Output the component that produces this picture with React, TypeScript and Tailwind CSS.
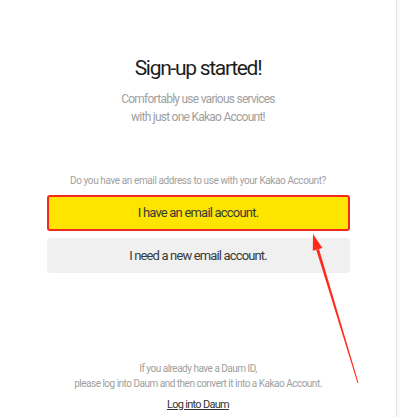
export default function App() {
  return (
    <div
      className="relative flex h-[417px] w-[400px] bg-[#fafafa]"
      style={{ fontFamily: 'Roboto, "Noto Sans", sans-serif' }}
    >
      <div className="flex h-full w-[397px] flex-col items-center border-r border-[#e4e4e4] bg-white pt-[54px]">
        <h1 className="text-[21px] leading-[28px] font-normal tracking-[-1.3px] text-[#1e1e1e]">Sign-up started!</h1>
        <p className="mt-[8px] text-center text-[12px] leading-[18px] tracking-[-0.75px] text-[#a0a0a0]">
          Comfortably use various services
          <br />
          with just one Kakao Account!
        </p>

        <p className="mt-[47px] text-[10px] leading-[16px] tracking-[-0.4px] text-[#a0a0a0]">
          Do you have an email address to use with your Kakao Account?
        </p>

        <button className="mt-[6px] h-[36px] w-[303px] rounded-[3px] border-2 border-[#f5281e] bg-[#fee500] text-[13px] tracking-[-0.8px] text-[#3a3a3a]">
          I have an email account.
        </button>
        <button className="mt-[7px] h-[35px] w-[303px] rounded-[4px] bg-[#f0f0f0] text-[13px] tracking-[-0.85px] text-[#3a3a3a]">
          I need a new email account.
        </button>

        <p className="mt-[88px] text-center text-[10px] leading-[15px] tracking-[-0.5px] text-[#a0a0a0]">
          If you already have a Daum ID,
          <br />
          please log into Daum and then convert it into a Kakao Account.
        </p>
        <a className="mt-[6px] text-[11px] leading-[16px] tracking-[-0.7px] text-[#333] underline">Log into Daum</a>
      </div>

      {/* annotation arrow */}
      <svg className="pointer-events-none absolute inset-0" width="400" height="417" viewBox="0 0 400 417">
        <polygon points="357.5,383 358.5,383 319.0,248.9 316.2,249.7" fill="#ff2a1a" />
        <polygon points="313,234 322.4,247.9 312.8,250.8" fill="#ff2a1a" />
      </svg>
    </div>
  );
}
